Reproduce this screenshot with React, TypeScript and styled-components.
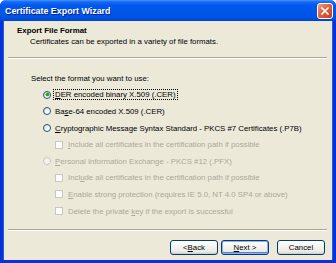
import React from 'react';
import styled, {createGlobalStyle} from 'styled-components'

const GlobalStyle = createGlobalStyle`
    html, body {
        margin: 0;
        padding: 0;
        background: #ffffff;
    }
    body {
        font-family: "Liberation Sans", Arial, sans-serif;
        font-size: 7.8px;
        color: #000000;
    }
    `

const Window = styled.div`
    width: 336px;
    height: 263px;
    display: flex;
    flex-direction: column;
    background: #0831d9;
    border-radius: 6px 6px 0 0;
    overflow: hidden;
    `

const TitleBar = styled.div`
    height: 21px;
    flex-shrink: 0;
    display: flex;
    align-items: center;
    justify-content: space-between;
    padding: 0 3px 0 5px;
    background: linear-gradient(to bottom, #4a98ff 0%, #1a6cf4 8%, #0058ee 25%, #0056ea 60%, #0052e2 85%, #0044c8 100%);
    `

const TitleText = styled.span`
    font-family: "Liberation Sans", Arial, sans-serif;
    font-weight: bold;
    font-size: 8.9px;
    color: #ffffff;
    text-shadow: 1px 1px 0 #0a1e8c;
    `

const CloseButton = styled.div`
    width: 14px;
    height: 14px;
    border: 1px solid #ffffff;
    border-radius: 3px;
    background: linear-gradient(135deg, #f0a088 0%, #e0613d 45%, #c43d1c 100%);
    display: flex;
    align-items: center;
    justify-content: center;
    `

const Client = styled.div`
    flex-grow: 1;
    margin: 0 3px 3px 3px;
    background: #ece9d8;
    display: flex;
    flex-direction: column;
    border-left: 1px solid #1c61e6;
    border-right: 1px solid #1c61e6;
    `

const Header = styled.div`
    height: 36px;
    flex-shrink: 0;
    padding: 5px 0 0 13px;
    box-sizing: border-box;
    line-height: 10.5px;
    `

const HeaderTitle = styled.div`
    font-weight: bold;
    font-size: 7.9px;
    `

const HeaderSub = styled.div`
    padding-left: 13px;
    `

const Separator = styled.div`
    height: 0;
    margin: 0 5px 0 4px;
    border-top: 1px solid #aca899;
    border-bottom: 1px solid #ffffff;
    `

const Body = styled.div`
    flex-grow: 1;
    padding: 11px 0 0 27px;
    display: flex;
    flex-direction: column;
    `

const Row = styled.div<{indent: number; disabled?: boolean}>`
    height: 16.6px;
    display: flex;
    align-items: center;
    gap: 3px;
    padding-left: ${props => props.indent}px;
    color: ${props => props.disabled ? '#aca899' : '#000000'};
    white-space: nowrap;
    `

const Radio = styled.span<{checked?: boolean; disabled?: boolean}>`
    width: 8px;
    height: 8px;
    box-sizing: border-box;
    border-radius: 50%;
    border: 1px solid ${props => props.disabled ? '#cac8bb' : '#1c5180'};
    background: ${props => props.disabled ? '#f4f3ee' : 'linear-gradient(135deg, #dcdcd4 0%, #ffffff 70%)'};
    display: flex;
    align-items: center;
    justify-content: center;
    flex-shrink: 0;
    &::after {
        content: '';
        display: ${props => props.checked ? 'block' : 'none'};
        width: 3px;
        height: 3px;
        border-radius: 50%;
        background: #21a121;
        box-shadow: 0 0 0 0.5px #4cc14c;
    }
    `

const Check = styled.span<{disabled?: boolean}>`
    width: 8px;
    height: 8px;
    box-sizing: border-box;
    border: 1px solid ${props => props.disabled ? '#cac8bb' : '#1c5180'};
    background: #ffffff;
    flex-shrink: 0;
    margin-right: 1px;
    `

const Label = styled.span<{focused?: boolean}>`
    line-height: 9px;
    padding: 0 1px;
    outline: ${props => props.focused ? '1px dotted #000000' : 'none'};
    `

const Footer = styled.div`
    height: 29px;
    flex-shrink: 0;
    display: flex;
    align-items: flex-start;
    justify-content: flex-end;
    padding: 9px 7px 0 0;
    box-sizing: border-box;
    `

const Button = styled.div<{primary?: boolean; spaced?: boolean}>`
    width: 48px;
    height: 15px;
    box-sizing: border-box;
    margin-left: ${props => props.spaced ? '8px' : '3px'};
    border: 1px solid #003c74;
    border-radius: 3px;
    background: linear-gradient(to bottom, #ffffff 0%, #f4f4f0 40%, #ecebe6 80%, #d6d0c5 100%);
    box-shadow: ${props => props.primary ? 'inset 0 0 0 1px #97aef4, inset 0 -1px 0 1px #5a7edc' : 'inset 0 -1px 0 #d6d0c5'};
    display: flex;
    align-items: center;
    justify-content: center;
    `

const U = styled.span`
    text-decoration: underline;
    `

interface OptionProps {
  kind: 'radio' | 'check'
  indent: number
  checked?: boolean
  disabled?: boolean
  focused?: boolean
  children: React.ReactNode
}

const Option = (props: OptionProps) => (
  <Row indent={props.indent} disabled={props.disabled}>
    {props.kind === 'radio'
      ? <Radio checked={props.checked} disabled={props.disabled} />
      : <Check disabled={props.disabled} />}
    <Label focused={props.focused}>{props.children}</Label>
  </Row>
)

const App = () => {
  return (
    <>
      <GlobalStyle />
      <Window>
        <TitleBar>
          <TitleText>Certificate Export Wizard</TitleText>
          <CloseButton>
            <svg width="8" height="8" viewBox="0 0 8 8">
              <path d="M1 1 L7 7 M7 1 L1 7" stroke="#ffffff" strokeWidth="1.6" strokeLinecap="square" />
            </svg>
          </CloseButton>
        </TitleBar>
        <Client>
          <Header>
            <HeaderTitle>Export File Format</HeaderTitle>
            <HeaderSub>Certificates can be exported in a variety of file formats.</HeaderSub>
          </Header>
          <Separator />
          <Body>
            <Row indent={0}>Select the format you want to use:</Row>
            <Option kind="radio" indent={12} checked focused><U>D</U>ER encoded binary X.509 (.CER)</Option>
            <Option kind="radio" indent={12}>Ba<U>s</U>e-64 encoded X.509 (.CER)</Option>
            <Option kind="radio" indent={12}><U>C</U>ryptographic Message Syntax Standard - PKCS #7 Certificates (.P7B)</Option>
            <Option kind="check" indent={24} disabled><U>I</U>nclude all certificates in the certification path if possible</Option>
            <Option kind="radio" indent={12} disabled><U>P</U>ersonal Information Exchange - PKCS #12 (.PFX)</Option>
            <Option kind="check" indent={24} disabled>Incl<U>u</U>de all certificates in the certification path if possible</Option>
            <Option kind="check" indent={24} disabled><U>E</U>nable strong protection (requires IE 5.0, NT 4.0 SP4 or above)</Option>
            <Option kind="check" indent={24} disabled>Delete the private <U>k</U>ey if the export is successful</Option>
          </Body>
          <Separator />
          <Footer>
            <Button>&lt; <U>B</U>ack</Button>
            <Button primary><U>N</U>ext &gt;</Button>
            <Button spaced>Cancel</Button>
          </Footer>
        </Client>
      </Window>
    </>
  )
}

export default App;
